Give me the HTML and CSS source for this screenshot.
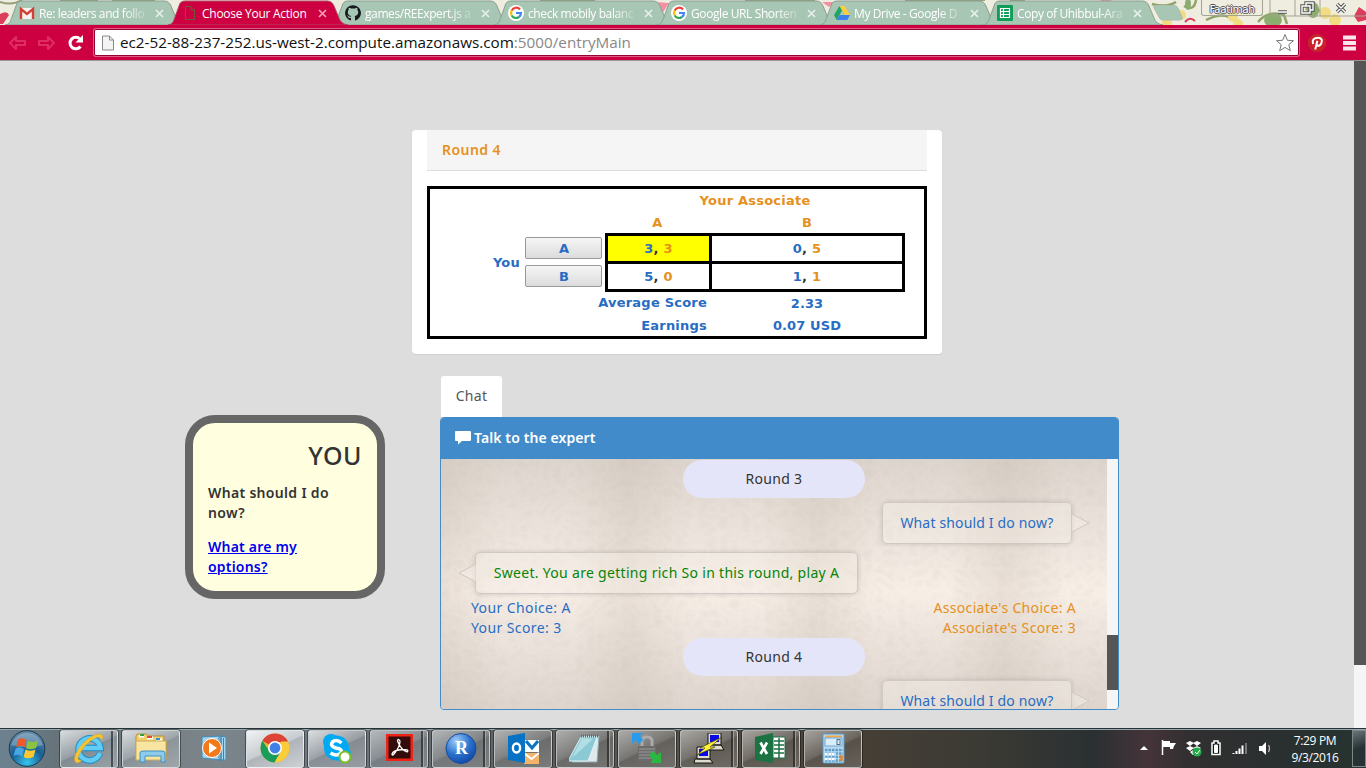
FILE: index.html
```html
<!DOCTYPE html>
<html lang="en"><head><meta charset="utf-8"><title>Choose Your Action</title><link rel="stylesheet" href="styles.css"></head>
<body>
<svg class="defs" width="0" height="0"><defs>
<symbol id="tab" viewBox="0 0 184 25"><path d="M0 25C5 24 5 22 7 17L11 6Q12 1 17 1H159Q164 1 166 6L171 18Q173 24 180 25Z"/></symbol>
<symbol id="google" viewBox="0 0 16 16"><circle cx="8" cy="8" r="8" fill="#fff"/><path d="M12 4.5A5 5 0 0 0 3.7 5.5" fill="none" stroke="#ea4335" stroke-width="2.2"/><path d="M3.7 5.5A5 5 0 0 0 3.7 10.5" fill="none" stroke="#fbbc05" stroke-width="2.2"/><path d="M3.7 10.5A5 5 0 0 0 11 12" fill="none" stroke="#34a853" stroke-width="2.2"/><path d="M11 12A5 5 0 0 0 13 8H8" fill="none" stroke="#4285f4" stroke-width="2.2"/></symbol>
<symbol id="bubble" viewBox="0 0 16 14"><path d="M1 0H15Q16 0 16 1V9Q16 10 15 10H7L3 13.5V10H1Q0 10 0 9V1Q0 0 1 0Z" fill="#fff"/></symbol>
<radialGradient id="orb" cx=".5" cy=".9" r=".9"><stop stop-color="#35c4ee"/><stop offset=".5" stop-color="#185f94"/><stop offset="1" stop-color="#6c8da5"/></radialGradient>
<radialGradient id="rball" cx=".35" cy=".25" r=".9"><stop stop-color="#a3cdf6"/><stop offset=".5" stop-color="#2a72ce"/><stop offset="1" stop-color="#0a3a99"/></radialGradient>
</defs></svg>
<header class="tabs">
<svg class="floral" width="1366" height="28"><rect width="1366" height="28" fill="#efece0"/>
<g fill="none" stroke="#98a079" stroke-width="2"><path d="M0 2Q12 6 22 0M60 0H98M112 0H155M540 0H595M745 0H815M905 0H985M1010 0H1025"/></g>
<g fill="none" stroke="#8fa368" stroke-width="2.500"><path d="M1152 4Q1166 8 1176 2M1184 6Q1194 12 1196 0M1206 20Q1222 12 1231 18M1258 22Q1268 10 1284 15L1287 24M1306 10Q1313 2 1320 12"/></g>
<g fill="#f2dc82"><circle cx="1181" cy="15" r="5"/><circle cx="1167" cy="22" r="5"/><circle cx="1233" cy="17" r="5"/><circle cx="1238" cy="24" r="5"/><circle cx="1325" cy="13" r="6"/><circle cx="1335" cy="20" r="6"/></g>
<g fill="#8cad70"><ellipse cx="1273" cy="20" rx="9" ry="7"/><ellipse cx="1188" cy="4" rx="3" ry="6"/><ellipse cx="1313" cy="10" rx="6" ry="8"/></g>
<g fill="#dc3d5b"><path d="M0 14Q7 10 9 15L3 24H0ZM1354 16L1359 7L1366 12V20L1358 22Z"/><path d="M1185 22Q1190 16 1195 21" fill="none" stroke="#dc3d5b" stroke-width="2"/><path d="M655 2L669 3L662 14ZM822 2H834L829 7ZM1100 0H1112L1106 4Z" fill="#f491a1"/></g></svg>
<div class="tab t1"><svg class="shape"><use href="#tab"/></svg><svg class="fav" viewBox="0 0 16 16"><path d="M1 3H15V14H1Z" fill="#f6f3ee"/><path d="M2 14V4L8 9L14 4V14" fill="none" stroke="#d33f34" stroke-width="2.4"/></svg><span class="tt fade">Re: leaders and follo</span><svg class="x" viewBox="0 0 9 9"><path d="M1 1L8 8M8 1L1 8"/></svg></div>
<div class="tab active"><svg class="shape"><use href="#tab"/></svg><svg class="fav" viewBox="0 0 16 16"><path d="M3.500 1.500H9L12.500 5V14.500H3.500ZM9 1.500V5H12.500" fill="none" stroke="#76553f"/></svg><span class="tt">Choose Your Action</span><svg class="x" viewBox="0 0 9 9"><path d="M1 1L8 8M8 1L1 8"/></svg></div>
<div class="tab"><svg class="shape"><use href="#tab"/></svg><svg class="fav" viewBox="0 0 16 16"><path d="M8 .2A7.8 7.8 0 0 0 5.4 15.4C6 15.5 6 15 6 14.3V13C3.6 13.4 3.2 12 3 11.5L1.8 10.5C3.6 10 3.8 12 5.9 11.7L6.2 11C3.5 10.6 2.8 9 2.8 7Q2.9 5.5 3.7 4.8Q3.3 3.5 3.9 2.7Q5 2.7 6.2 3.5H9.8Q11 2.7 12.1 2.7Q12.7 3.5 12.3 4.8Q13.1 5.5 13.2 7C13.2 9 12.5 10.6 9.8 11L10 12V14.5C10 15 10 15.5 10.6 15.4A7.8 7.8 0 0 0 8 .2Z" fill="#161a1c"/></svg><span class="tt fade">games/REExpert.js a</span><svg class="x" viewBox="0 0 9 9"><path d="M1 1L8 8M8 1L1 8"/></svg></div>
<div class="tab"><svg class="shape"><use href="#tab"/></svg><svg class="fav"><use href="#google"/></svg><span class="tt fade">check mobily balanc</span><svg class="x" viewBox="0 0 9 9"><path d="M1 1L8 8M8 1L1 8"/></svg></div>
<div class="tab"><svg class="shape"><use href="#tab"/></svg><svg class="fav"><use href="#google"/></svg><span class="tt fade">Google URL Shorten</span><svg class="x" viewBox="0 0 9 9"><path d="M1 1L8 8M8 1L1 8"/></svg></div>
<div class="tab"><svg class="shape"><use href="#tab"/></svg><svg class="fav" viewBox="0 0 16 16"><path d="M5.500 1H10.500L16 10H11Z" fill="#fdcd3c"/><path d="M5.500 1L8 5.500L2.700 15L0 10Z" fill="#23a464"/><path d="M5.500 10H16L13.300 15H2.700Z" fill="#3b80ee"/></svg><span class="tt fade">My Drive - Google D</span><svg class="x" viewBox="0 0 9 9"><path d="M1 1L8 8M8 1L1 8"/></svg></div>
<div class="tab"><svg class="shape"><use href="#tab"/></svg><svg class="fav" viewBox="0 0 16 16"><rect width="16" height="16" rx="1" fill="#0f9d58"/><path d="M3.500 3.500H12.500V12.500H3.500ZM3.500 6.500H12.500M3.500 9.500H12.500M6.500 3.500V12.500" fill="none" stroke="#fff" stroke-width="1.200"/></svg><span class="tt fade">Copy of Uhibbul-Ara</span><svg class="x" viewBox="0 0 9 9"><path d="M1 1L8 8M8 1L1 8"/></svg></div>
<svg class="newtab" width="32" height="16"><path d="M3 .5H22Q25 .5 26 3L30 12Q31 15 28 15H11Q8 15 7 12L2 3Q1 1 3 .5Z" fill="#a7c6b4" stroke="#a9bdaf"/></svg>
<div class="user">Faatimah</div>
<svg class="wincontrols" width="100" height="18" fill="none"><path d="M1 0V13Q1 16 4 16H95Q98 16 98 13V0M26 0V16M51 0V16" stroke="#a3a394"/><g stroke="#555" stroke-width="3.400"><path d="M9 12H18M33 6H41V13H33ZM37 6V3H44V10H41M68 4L76 12M76 4L68 12"/></g><g stroke="#fff" stroke-width="1.400"><path d="M9 12H18M33 6H41V13H33ZM37 6V3H44V10H41M68 4L76 12M76 4L68 12"/></g></svg>
</header>
<div class="toolbar">
<svg class="navicons" width="94" height="34" fill="none"><g stroke="#e02d62" stroke-width="2" stroke-linejoin="round"><path d="M10 17L16 11V15H25V19H16V23Z"/><path d="M54 17L48 11V15H39V19H48V23Z"/></g><path d="M80 13A5.800 5.800 0 1 0 80.500 20.500" stroke="#fff" stroke-width="3"/><path d="M83 9V16.500H75.500Z" fill="#fff"/></svg>
<div class="omnibox"><svg width="14" height="16"><path d="M1.500 1H8.500L12.500 5V15H1.500ZM8.500 1V5H12.500" fill="#f4f4f4" stroke="#888"/></svg><span class="url">ec2-52-88-237-252.us-west-2.compute.amazonaws.com<i>:5000/entryMain</i></span><svg class="star" width="20" height="20"><path d="M10 1.500L12.400 7.300L18.500 7.700L13.800 11.600L15.300 17.700L10 14.400L4.700 17.700L6.200 11.600L1.500 7.700L7.600 7.300Z" fill="#fff" stroke="#777"/></svg></div>
<svg class="pin" width="18" height="18"><circle cx="9" cy="9" r="8.800" fill="#cb2027" stroke="#b0403c" stroke-width=".5"/><path d="M5.300 10Q3.500 6 7.300 4.200Q12.500 2.500 13.800 6Q14 10.500 11 11.700Q9.500 12 8.700 10.700M9.400 6.800L7.200 15.500" fill="none" stroke="#fff" stroke-width="2"/></svg>
<svg class="menu" width="14" height="16"><path d="M0 2.500H13M0 8H13M0 13.500H13" stroke="#fde5ee" stroke-width="4"/></svg>
</div>
<main class="page"><div class="content">
<section class="card"><h3>Round 4</h3>
<div class="game">
<div class="cap">Your Associate</div>
<div class="letters"><span>A</span><span>B</span></div>
<div class="play"><span class="you">You</span><div class="btns"><button>A</button><button>B</button></div>
<div class="matrix"><div class="hot">3<b>,</b> <i>3</i></div><div>0<b>,</b> <i>5</i></div><div>5<b>,</b> <i>0</i></div><div>1<b>,</b> <i>1</i></div></div></div>
<div class="sum"><span>Average Score</span><span class="v">2.33</span></div>
<div class="sum last"><span>Earnings</span><span class="v">0.07 USD</span></div>
</div></section>
<div class="lower">
<aside class="youbox"><h2>YOU</h2><p>What should I do<br>now?</p><p><a>What are my<br>options?</a></p></aside>
<section class="chat"><div class="chattab">Chat</div>
<div class="panel"><div class="phead"><svg width="16" height="14"><use href="#bubble"/></svg><span>Talk to the expert</span></div>
<div class="pbody"><div class="log">
<svg class="paper" width="666" height="250"><filter id="n" x="0" y="0" width="100%" height="100%"><feTurbulence type="turbulence" baseFrequency=".09 .1" numOctaves="3" seed="7"/><feColorMatrix values="0 0 0 0 .5 0 0 0 0 .44 0 0 0 0 .4 1.2 0 0 0 -.12"/></filter><rect width="666" height="250" filter="url(#n)" opacity=".17"/></svg>
<div class="round">Round 3</div>
<div class="msg right">What should I do now?<svg width="18" height="20"><path d="M0 1L17 10L0 19"/></svg></div>
<div class="msg left">Sweet. You are getting rich So in this round, play A<svg width="18" height="20"><path d="M18 1L1 10L18 19"/></svg></div>
<div class="result"><div>Your Choice: A<br>Your Score: 3</div><div class="assoc">Associate's Choice: A<br>Associate's Score: 3</div></div>
<div class="round">Round 4</div>
<div class="msg right">What should I do now?<svg width="18" height="20"><path d="M0 1L17 10L0 19"/></svg></div>
</div><div class="pscroll"><div></div></div></div></div></section>
</div></div>
<div class="scroll"><div></div></div></main>
<footer class="taskbar">
<svg class="start" width="38" height="38"><circle cx="19" cy="18.500" r="17.800" fill="url(#orb)" stroke="#173c54"/><path d="M3 15Q8 3 19 3Q30 3 35 15Q20 20 3 15Z" fill="#fff" opacity=".25"/><path d="M10 9.500Q14.500 7 18.500 10L16.500 17.500Q12.500 14.500 8 17Z" fill="#ee5a2c"/><path d="M20 10.500Q24 13.500 30 10.500L28 18Q22 20.500 18 18Z" fill="#8bc540"/><path d="M7.600 18.500Q12 16 16 19L14 26.500Q10 23.500 5.500 26Z" fill="#4aa6e5"/><path d="M17.600 19.500Q22 22 27.500 19.500L25.500 27Q20 29.500 15.600 27Z" fill="#fdc82f"/></svg>
<div class="tb stack hi"><svg width="32" height="32"><path d="M27 20A11 11 0 1 1 27.500 15H10" fill="none" stroke="#1b8dcc" stroke-width="6.500"/><path d="M27 20A11 11 0 1 1 27.500 15H10" fill="none" stroke="#62ccf3" stroke-width="4.500"/><path d="M4 30Q-2 28 6 15Q16 2 26 1Q32 1 28 9Q29 2 22 5Q11 11 6 22Q3 28 9 27Q6 30 4 30Z" fill="#f7c52f" stroke="#dda11b" stroke-width=".5"/></svg></div>
<div class="tb hi"><svg width="32" height="32"><path d="M1 6V3Q1 1 4 1H11L14 3H29V8H31V26H1Z" fill="#efcf71" stroke="#b98e35"/><path d="M4 3H9M12 5H18M21 7H27" stroke="#fff" stroke-width="3"/><path d="M5 2H9" stroke="#2ba246" stroke-width="2"/><path d="M12 4H17" stroke="#df4938" stroke-width="2"/><path d="M21 6H25" stroke="#3a8fd3" stroke-width="2"/><path d="M1 8H31V27H1Z" fill="#f8e5a1" stroke="#ceac54"/><path d="M5 29V20Q5 18 8 18H27Q30 18 30 20V29H26V23H10V29Z" fill="#8dcbec" stroke="#408fc0"/></svg></div>
<div class="tb plain"><svg width="32" height="32"><path d="M5 4L24 3V27L5 25ZM22 3L29 4V27L22 27Z" fill="#a7d2ea" stroke="#3f8db7"/><path d="M24 4V28M26.500 5V27" stroke="#3c82ac"/><circle cx="15" cy="15" r="9.500" fill="#f27a1a" stroke="#fff"/><path d="M12 9.500L20 15L12 20.500Z" fill="#fff"/></svg></div>
<div class="tb hi bright"><svg width="32" height="32"><circle cx="16" cy="15" r="14.500" fill="#eab52c"/><g transform="translate(0 -1)"><path d="M16 16L3.400 8.800A14.500 14.500 0 0 1 28.600 8.800L28.800 10H16Z" fill="#dc4437"/><path d="M3.400 8.800A14.500 14.500 0 0 0 15.800 30.500L21.500 20L10 18.500Z" fill="#1a9d5a"/><path d="M28.800 9.500A14.500 14.500 0 0 1 15.500 30.500L22 19V9.500Z" fill="#fbcd3a"/><circle cx="16" cy="16" r="7" fill="#fff"/><circle cx="16" cy="16" r="5.400" fill="#4280e8"/></g></svg></div>
<div class="tb hi"><svg width="32" height="32"><g fill="#00aaf2"><circle cx="10" cy="9" r="8"/><circle cx="15.500" cy="15" r="12.500"/><circle cx="22" cy="21" r="8"/></g><path d="M20.500 10Q16 6 12 8.500Q8 13 15 15Q22 16 20 20Q16 24 9.500 20" fill="none" stroke="#fff" stroke-width="3.500"/><circle cx="24" cy="24" r="5.500" fill="#fff" stroke="#79bd25" stroke-width="2"/></svg></div>
<div class="tb stack"><svg width="32" height="32"><rect x="3" y="1" width="27" height="27" fill="#ee2316"/><rect x="5.500" y="3.500" width="22" height="22" fill="#330b0a"/><path d="M9 21Q10 17 20 16.500Q27 16.500 24 19Q18 17 14.500 8Q15 5 17 8Q17 14 11 21Q9 23 9 21Z" fill="none" stroke="#fff" stroke-width="1.300"/></svg></div>
<div class="tb stack"><svg width="32" height="32"><circle cx="16" cy="15.500" r="15" fill="url(#rball)" stroke="#154b9e"/><text x="10" y="21" font-family="Liberation Serif" font-weight="bold" font-size="18" fill="#fff">R</text></svg></div>
<div class="tb"><svg width="32" height="32"><path d="M18 7H32V19H18Z" fill="#fff"/><path d="M19 8L25 15L31 8" fill="none" stroke="#0a73c2" stroke-width="3"/><path d="M17 20H32V31H17Z" fill="#f3b36a"/><path d="M17 20L24.500 26L32 20" fill="none" stroke="#fff" stroke-width="2"/><path d="M1 3L18 0V30L1 27Z" fill="#0873c4"/><ellipse cx="9.500" cy="15" rx="3.600" ry="4.500" fill="none" stroke="#fff" stroke-width="2.400"/></svg></div>
<div class="tb stack"><svg width="32" height="32"><path d="M14 3H30L28 29H3Z" fill="#dfe9eb" stroke="#8ea9af"/><path d="M12 4H28L19 28H-1Z" fill="#8bc9d5" stroke="#dcf2f3"/><path d="M12 3H30" stroke="#596b70" stroke-width="3" stroke-dasharray="1 1"/><path d="M13 5L24 6L3 25Z" fill="#cdecf1" opacity=".6"/></svg></div>
<div class="tb"><svg width="32" height="32"><path d="M11 14V8Q11 4 16 4Q21 4 21 8V14" fill="none" stroke="#aaa" stroke-width="3"/><rect x="7" y="13" width="18" height="15" rx="1" fill="#6c6c6c"/><path d="M8 16H24M8 19H24M8 22H24M8 25H24" stroke="#999"/><path d="M1 0H12L9 3L12 7L8 11L5 7L1 11Z" fill="#279bed"/><path d="M30 19V30H19L22 27L18 22L22 18L26 22Z" fill="#29b840"/></svg></div>
<div class="tb stack"><svg width="32" height="32"><g fill="#dedccf" stroke="#161611"><path d="M15 0H28V12H15ZM13 12H28L31 17H14ZM4 14H17V26H4ZM2 26H17L20 30H1Z"/></g><path d="M17 2H26V9H17ZM6 16H15V23H6Z" fill="#0909e8"/><path d="M29 4L17 14H22L4 22L12 15H7Z" fill="#fff43a" stroke="#373500" stroke-width=".6"/></svg></div>
<div class="tb stack hasx"><svg width="32" height="32"><path d="M18 4H30V25H18Z" fill="#fff" stroke="#1d7043"/><path d="M19 8H29M19 12H29M19 16H29M19 20H29M24 5V25" stroke="#1d7043" stroke-width="1.500"/><path d="M0 4L18 0V30L0 27Z" fill="#1b7243"/><path d="M5.500 9.500L12 21M12 9.500L5.500 21" stroke="#fff" stroke-width="2.700"/></svg></div>
<div class="tb"><svg width="32" height="32"><rect x="6" y="1" width="21" height="29" rx="1" fill="#b8dbf2" stroke="#5a9bcb"/><path d="M8 3.500H25" stroke="#f2a746" stroke-width="2"/><rect x="8" y="5" width="17" height="8" fill="#d9eefb" stroke="#6fa6ce"/><rect x="20" y="6.500" width="3" height="5" fill="none" stroke="#4c6f8e"/><path d="M8 17H26M8 20.500H26M8 24H26M8 27.500H26" stroke="#5d9dc9" stroke-width="2.500" stroke-dasharray="2.500 1"/><path d="M8 21H19M8 26H19" stroke="#fff" stroke-width="2.500" stroke-dasharray="2.500 1"/><path d="M24.500 22V28" stroke="#ef8719" stroke-width="2.500"/></svg></div>
<div class="tray"><svg width="142" height="24"><g fill="#fff"><path d="M0 14L4 10L8 14ZM23 5H30V11H23ZM30 7H36L34 10L33 13H30Z"/><path d="M22.500 4V19" stroke="#fff" stroke-width="1.500"/><path d="M50 5L54 7L50 10L46 7ZM57 5L61 7L57 10L53 7ZM50 10L54 12L50 15L46 12ZM57 10L61 12L57 15L53 12ZM50 16L53 14L57 17L53 19Z"/></g><circle cx="57" cy="16" r="4.500" fill="#22ac48"/><path d="M55 16L57 18L60 14" stroke="#fff" fill="none"/><path d="M74 7V5H78V7H80V18.500H72V7Z" fill="#101818" stroke="#fff" stroke-width="1.500"/><path d="M74.500 9H77.500V16.500H74.500Z" fill="#fff" stroke="#fff"/><path d="M93.500 18V17M96.500 18V15M99.500 18V12.500M102.500 18V9.500" stroke="#fff" stroke-width="2"/><path d="M106 18V7" stroke="#777" stroke-width="2"/><path d="M119 10H122L126 6V19L122 15H119Z" fill="#fff"/><path d="M128.500 9Q130.500 12 128.500 16" fill="none" stroke="#bbb" stroke-width="1.300"/></svg></div>
<div class="clock"><span>7:29 PM</span><span>9/3/2016</span></div><div class="peek"></div>
</footer>
</body></html>
```
FILE: styles.css
```css
*{box-sizing:border-box}
body{margin:0;width:1366px;height:768px;overflow:hidden;display:flex;flex-direction:column;font-family:"Noto Sans","Open Sans",sans-serif;background:#ddd}
i,b{font-style:normal}
.defs{position:absolute}
.tabs{height:25px;position:relative;display:flex;padding-left:5px;flex:none}
.floral{position:absolute;left:0;top:0}
.tab{position:relative;width:163px;height:25px;flex:none;display:flex;align-items:center;padding:1px 0 0 14px;font:12px "Open Sans",sans-serif;color:#fff}
.shape{position:absolute;left:0;top:0;width:184px;height:25px;fill:#a7c6b4;stroke:#899f91;stroke-width:1}
.active{z-index:2}
.active .shape{fill:#cd0041;stroke:#b04a64}
.fav{position:relative;width:16px;height:16px;flex:none;margin-right:4px}
.tt{position:relative;width:112px;white-space:nowrap;flex:none;letter-spacing:-.27px}
.fade{letter-spacing:-.4px;-webkit-mask-image:linear-gradient(90deg,#000 76%,rgba(0,0,0,.2) 96%);mask-image:linear-gradient(90deg,#000 76%,rgba(0,0,0,.2) 96%)}
.x{position:relative;width:9px;height:9px;margin-left:4px;flex:none;fill:none;stroke:#e7f1eb;stroke-width:1.7}
.active .x{stroke:#f0a0b8}
.newtab{position:relative;margin:5px 0 0 6px;flex:none}
.user{position:relative;margin-left:17px;width:62px;height:16px;border:1px solid #a3a394;border-top:0;border-radius:0 0 3px 3px;font:10.5px/18px "DejaVu Sans",sans-serif;letter-spacing:-.4px;text-align:center;color:#fff;text-shadow:1px 0 #555,-1px 0 #555,0 1px #555,0 -1px #555;flex:none}
.wincontrols{position:relative;margin-left:6px;flex:none}
.toolbar{height:36px;background:#cd0041;border-bottom:1px solid #999;display:flex;align-items:center;flex:none;position:relative}
.navicons{flex:none}
.omnibox{width:1205px;height:27px;background:#fff;border:1px solid #930031;box-shadow:0 0 0 1px #de5f86;border-radius:2px;display:flex;align-items:center;padding:0 3px 0 6px;flex:none}
.url{font:15.25px/24px "Open Sans",sans-serif;margin:-2px 0 0 5px;color:#111;white-space:nowrap}
.url i{color:#888}
.star{margin-left:auto}
.pin{margin-left:9px}.menu{margin-left:17px}
.page{height:667px;background:#ddd;display:flex;flex:none}
.content{width:1354px;padding-top:69px;flex:none}
.card{width:530px;height:224px;margin-left:412px;background:#fff;border-radius:4px;padding:0 15px;box-shadow:0 1px 1px rgba(0,0,0,.07)}
.card h3{margin:0 0 15px;height:41px;background:#f5f5f5;border-bottom:1px solid #ddd;padding-left:15px;font-size:14px;line-height:40px;font-weight:600;color:#e5911d;letter-spacing:.45px}
.game{height:153px;border:3px solid #000;padding-top:1px;font:bold 13px/22px "DejaVu Sans",sans-serif;color:#286cc4;letter-spacing:.22px}
.cap{margin-left:175px;width:300px;text-align:center;color:#e5911d}
.letters{display:grid;grid-template-columns:105px 194px;margin-left:175px;height:21px;text-align:center;color:#e5911d}
.play{display:flex;height:59px}
.you{width:90px;text-align:right;line-height:59px}
.btns{margin:4px 3px 0 5px;width:77px;display:flex;flex-direction:column;gap:6px}
button{height:22px;padding:1px 0 0 1px;border:1px solid #999;border-radius:2px;background:linear-gradient(#f5f5f5,#dcdcdc);font:bold 13px/18px "DejaVu Sans",sans-serif;color:#286cc4}
.matrix{display:grid;grid-template-columns:101px 190px;grid-template-rows:25px 25px;gap:3px;padding:3px;background:#000;width:300px;height:59px}
.matrix div{background:#fff;text-align:center;line-height:25px}
.matrix .hot{background:#ff0}
.matrix i{color:#e5911d}.matrix b{color:#333}
.sum{display:grid;grid-template-columns:277px 200px;text-align:right;line-height:21px}
.sum .v{text-align:center;line-height:23px;letter-spacing:.1px}
.last{line-height:22px}
.last .v{line-height:22px}
.lower{display:flex;margin:22px 0 0 185px;align-items:flex-start}
.youbox{width:200px;height:184px;margin-top:39px;border:8px solid #666;border-radius:30px;background:#ffffe0;padding:17px 15px;color:#333;font-size:14px;line-height:20px;font-weight:600;letter-spacing:.32px}
.youbox h2{margin:0 0 13px;text-align:right;font-size:25px;line-height:30px;font-weight:500;letter-spacing:.5px}
.youbox p{margin:0 0 14px;white-space:nowrap}
.youbox a{color:#00e;text-decoration:underline;letter-spacing:.2px}
.chat{width:679px;margin-left:55px;font-size:14px;line-height:20px;letter-spacing:.3px}
.chattab{width:61px;height:41px;margin-left:1px;background:#fff;border-radius:3px 3px 0 0;text-align:center;line-height:39px;color:#555}
.panel{height:293px;border:1px solid #428bca;border-radius:4px;overflow:hidden}
.phead{height:41px;background:#428bca;display:flex;align-items:center;gap:3px;padding:0 0 2px 14px;color:#fff;font-weight:600;letter-spacing:.1px}
.pbody{display:flex;height:250px}
.log{position:relative;width:666px;height:250px;overflow:hidden;padding-top:1px;background:repeating-linear-gradient(90deg,rgba(182,169,158,.2) 0,rgba(255,255,255,0) 60px,rgba(255,255,255,0) 130px,rgba(182,169,158,.2) 188px),linear-gradient(#ded6ce,#efe7df 35%,#f8efe7 53%,#efe7df 68%,#ded6ce)}
.paper{position:absolute;left:0;top:0}
.round{position:relative;width:182px;height:38px;margin-left:242px;border-radius:19px;background:#e4e5f8;line-height:38px;text-align:center;color:#333}
.msg{position:relative;height:42px;border:1px solid #d0c8c2;border-radius:5px;line-height:40px;width:max-content;box-shadow:0 0 5px rgba(0,0,0,.15);background:rgba(247,240,233,.35);text-align:center}
.right{width:190px;margin:4px 0 0 441px;color:#286cc4;letter-spacing:.16px}
.left{width:383px;margin:8px 0 0 34px;color:#078407}
.msg svg{position:absolute;top:10px;fill:rgba(247,240,233,.45);stroke:#cfc7c1}
.right svg{left:189px}.left svg{right:381px}
.result{position:relative;display:flex;justify-content:space-between;margin:4px 31px 0 30px;color:#286cc4;letter-spacing:.4px}
.assoc{text-align:right;color:#e5911d;letter-spacing:.34px}
.pscroll{width:11px;background:#f5f5f5;padding-top:176px}.pscroll div{height:55px;background:#555}
.scroll{width:12px;background:#f5f5f5}.scroll div{height:604px;background:#555}
.taskbar{height:40px;flex:none;border-top:1px solid #24323a;box-shadow:inset 0 1px #99a7ab;background:linear-gradient(90deg,#6d8290 0,#66737a 4%,#7c858a 16%,#6e7780 24%,#5d5e5d 40%,#4f4940 55%,#463f36 63%,#3b3a34 72%,#2a3032 80%,#44343a 84%,#322f31 87%,#29302f 94%,#263430);display:flex}
.start{margin:1px 14px 0 8px;flex:none}
.tb{position:relative;width:58px;height:38px;margin:1px 4px 0 0;flex:none;border:1px solid rgba(240,245,248,.55);border-radius:3px;box-shadow:0 0 0 1px rgba(0,0,0,.4);background:linear-gradient(155deg,rgba(255,255,255,.5),rgba(255,255,255,.2) 48%,rgba(255,255,255,.09) 52%,rgba(255,255,255,.18));padding:2px 0 0 12px}
.hi{background:linear-gradient(155deg,rgba(255,255,255,.75),rgba(255,255,255,.3) 48%,rgba(255,255,255,.17) 50%,rgba(255,255,255,.3))}
.bright{background:linear-gradient(155deg,#f0f3f5,#c7ccd0 48%,#aeb4b9 50%,#cdd1d4)}
.plain{border-color:transparent;box-shadow:none;background:none}
.stack::after{content:"";position:absolute;right:3px;top:0;bottom:0;width:2px;background:rgba(20,25,28,.6);border-right:1px solid rgba(255,255,255,.5)}
.tray{margin:7px 0 0 274px;width:142px;flex:none}
.clock{width:70px;display:flex;flex-direction:column;margin:3px 0 0 -2px;text-align:center;font:12px/17px "Open Sans",sans-serif;letter-spacing:-.35px;color:#fff;flex:none}
.peek{width:14px;margin:1px 0 1px auto;border:1px solid #7c8788;background:linear-gradient(160deg,#687477,#263333 50%)}
```
